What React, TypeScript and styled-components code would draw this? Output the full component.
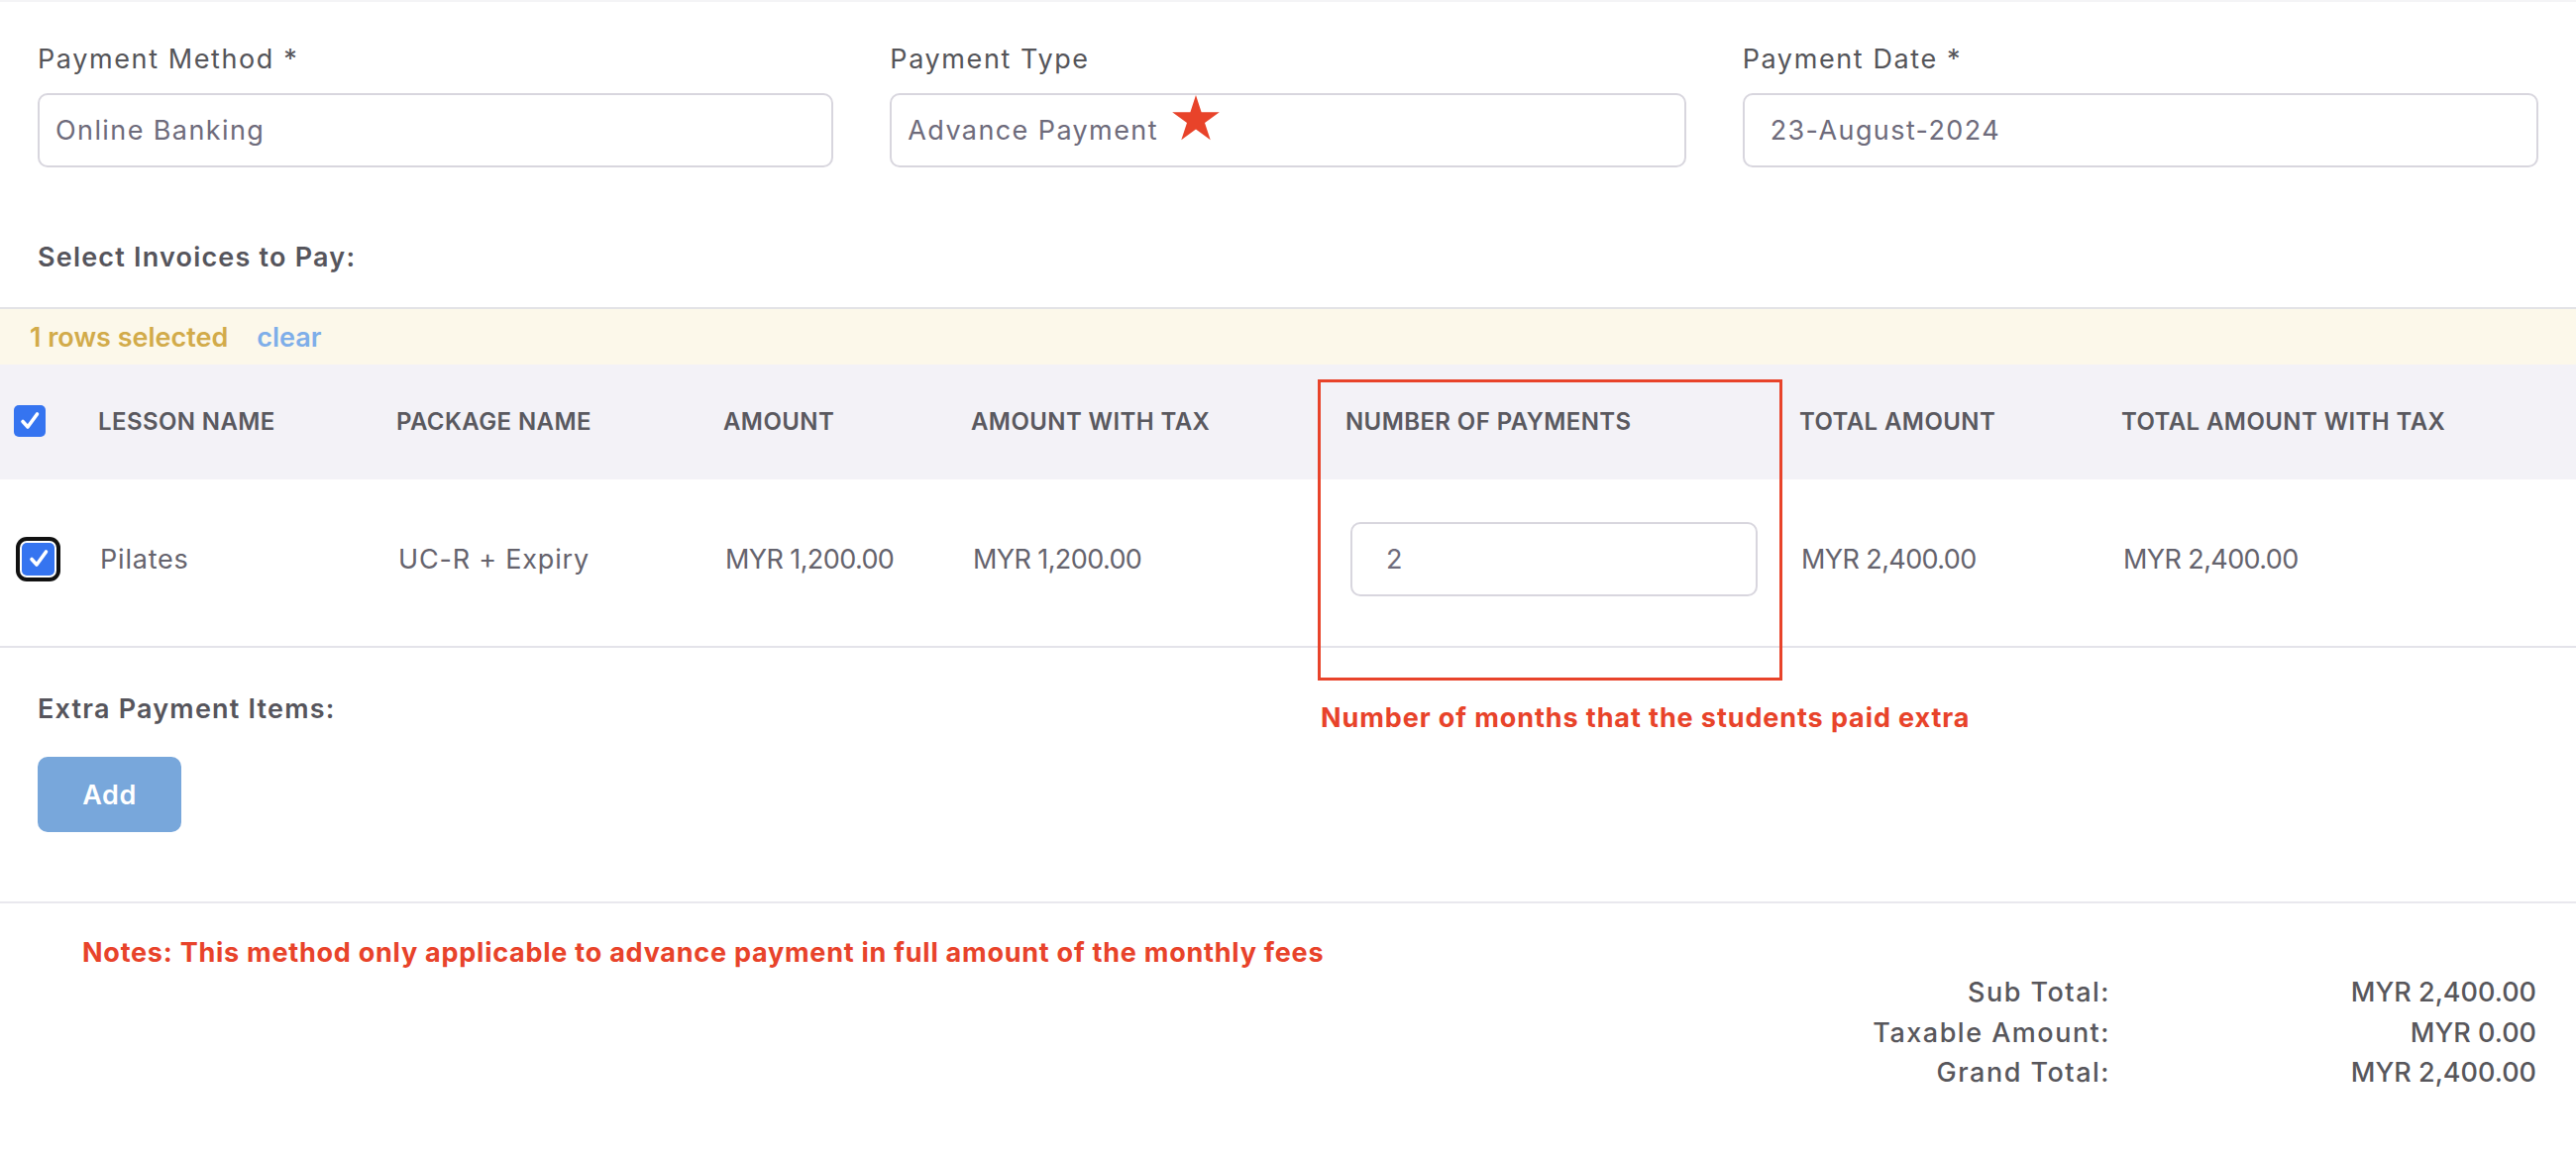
import { Fragment } from 'react';
import styled, { createGlobalStyle } from 'styled-components';

const GlobalStyle = createGlobalStyle`
  html, body {
    margin: 0;
    padding: 0;
    background: #ffffff;
  }
  body {
    font-family: Inter, "Open Sans", sans-serif;
    color: #6e6b7b;
  }
  * {
    box-sizing: border-box;
  }
`;

const Page = styled.div`
  width: 2600px;
  min-height: 1168px;
  border-top: 2px solid #f4f4f6;
`;

const FieldsRow = styled.div`
  display: grid;
  grid-template-columns: repeat(3, 1fr);
  column-gap: 57px;
  padding: 38px 38px 0;
`;

const Field = styled.div`
  display: flex;
  flex-direction: column;
  gap: 14px;
`;

const Label = styled.label`
  font-size: 27px;
  line-height: 40px;
  letter-spacing: 1.6px;
  color: #555559;
`;

const InputBox = styled.div<{ $pad?: number }>`
  position: relative;
  display: flex;
  align-items: center;
  height: 75px;
  padding: 0 ${(p) => p.$pad ?? 16}px;
  border: 2px solid #d8d6de;
  border-radius: 10px;
  font-size: 27px;
  letter-spacing: 1.4px;
  color: #6e6b7b;
  background: #fff;
`;

const Star = styled.svg`
  position: absolute;
  left: 282px;
  top: -1px;
  width: 50px;
  height: 48px;
`;

const SectionTitle = styled.div<{ $top: number }>`
  margin: ${(p) => p.$top}px 0 0 38px;
  font-size: 27px;
  line-height: 40px;
  font-weight: 600;
  letter-spacing: 1.2px;
  color: #56555c;
`;

const TableWrap = styled.div`
  position: relative;
  margin-top: 30px;
`;

const SelectionBar = styled.div`
  display: flex;
  align-items: center;
  gap: 29px;
  height: 58px;
  padding-left: 30px;
  border-top: 2px solid #e3e3e6;
  background: #fcf8ea;
  font-size: 27px;
  font-weight: 600;
`;

const SelectedText = styled.span`
  color: #d2ab4a;
`;

const ClearLink = styled.a`
  color: #7eaee9;
  cursor: pointer;
`;

const cols = '82px 301px 330px 250px 378px 458px 325px 1fr';

const HeaderRow = styled.div`
  display: grid;
  grid-template-columns: ${cols};
  align-items: center;
  height: 116px;
  padding-bottom: 2px;
  background: #f3f2f7;
`;

const HeadCell = styled.div`
  padding-left: 17px;
  font-size: 24px;
  font-weight: 600;
  letter-spacing: 0.4px;
  text-transform: uppercase;
  color: #5a595f;
  white-space: nowrap;
`;

const BodyRow = styled.div`
  display: grid;
  grid-template-columns: ${cols};
  align-items: center;
  height: 170px;
  padding-bottom: 8px;
  border-bottom: 2px solid #e4e3ea;
`;

const BodyCell = styled.div<{ $num?: boolean }>`
  padding-left: 19px;
  font-size: 27px;
  letter-spacing: ${(p) => (p.$num ? '-0.6px' : '0.8px')};
  color: #65636d;
  white-space: nowrap;
`;

const CheckCell = styled.div<{ $left: number }>`
  display: flex;
  align-items: center;
  padding-left: ${(p) => p.$left}px;
`;

const CheckBox = styled.span<{ $focused?: boolean }>`
  display: inline-flex;
  align-items: center;
  justify-content: center;
  width: ${(p) => (p.$focused ? 33 : 32)}px;
  height: ${(p) => (p.$focused ? 33 : 32)}px;
  border-radius: 5px;
  background: #3574f0;
  box-shadow: ${(p) => (p.$focused ? '0 0 0 2px #ffffff, 0 0 0 6px #111111' : 'none')};
  svg {
    width: 24px;
    height: 24px;
  }
`;

const InputCell = styled.div`
  padding: 0 25px 0 22px;
`;

const AnnotationBox = styled.div`
  position: absolute;
  left: 1330px;
  top: 73px;
  width: 469px;
  height: 304px;
  border: 3px solid #e8432a;
  pointer-events: none;
`;

const AnnotationText = styled.div`
  position: absolute;
  left: 1333px;
  top: 395px;
  font-size: 27px;
  line-height: 40px;
  font-weight: 700;
  letter-spacing: 0.9px;
  color: #e8432a;
  white-space: nowrap;
`;

const AddButton = styled.button`
  display: block;
  margin: 28px 0 0 38px;
  width: 145px;
  height: 76px;
  border: none;
  border-radius: 10px;
  background: #78a7db;
  color: #ffffff;
  font-family: inherit;
  font-size: 27px;
  font-weight: 600;
  letter-spacing: 0.6px;
`;

const Divider = styled.hr`
  margin: 70px 0 0;
  border: none;
  border-top: 2px solid #e9e8ee;
`;

const Footer = styled.div`
  padding: 30px 40px 40px 83px;
`;

const Note = styled.div`
  font-size: 27px;
  line-height: 40px;
  font-weight: 700;
  letter-spacing: 0.75px;
  color: #e8432a;
`;

const Totals = styled.div`
  display: grid;
  grid-template-columns: auto 430px;
  justify-content: end;
  font-size: 27px;
  line-height: 40.5px;
  font-weight: 500;
  color: #58575c;
  text-align: right;
`;

const TotalLabel = styled.span`
  letter-spacing: 1.5px;
`;

const TotalValue = styled.span`
  letter-spacing: 0;
`;

const Check = () => (
  <svg viewBox="0 0 24 24" fill="none">
    <path d="M5 12.5 L10 18 L19.5 5" stroke="#fff" strokeWidth="3.6" strokeLinecap="round" strokeLinejoin="round" />
  </svg>
);

const headers = [
  'Lesson Name',
  'Package Name',
  'Amount',
  'Amount With Tax',
  'Number of Payments',
  'Total Amount',
  'Total Amount With Tax',
];

const totals = [
  ['Sub Total:', 'MYR 2,400.00'],
  ['Taxable Amount:', 'MYR 0.00'],
  ['Grand Total:', 'MYR 2,400.00'],
];

export default function App() {
  return (
    <Page>
      <GlobalStyle />
      <FieldsRow>
        <Field>
          <Label>Payment Method *</Label>
          <InputBox>Online Banking</InputBox>
        </Field>
        <Field>
          <Label>Payment Type</Label>
          <InputBox>
            Advance Payment
            <Star viewBox="0 0 50 48">
              <polygon
                points="25,1 30.6,18.3 48.8,18.3 34,28.9 39.7,46.2 25,35.5 10.3,46.2 16,28.9 1.2,18.3 19.4,18.3"
                fill="#e8432a"
              />
            </Star>
          </InputBox>
        </Field>
        <Field>
          <Label>Payment Date *</Label>
          <InputBox $pad={26}>23-August-2024</InputBox>
        </Field>
      </FieldsRow>

      <SectionTitle $top={71}>Select Invoices to Pay:</SectionTitle>

      <TableWrap>
        <SelectionBar>
          <SelectedText>1 rows selected</SelectedText>
          <ClearLink>clear</ClearLink>
        </SelectionBar>
        <HeaderRow>
          <CheckCell $left={14}>
            <CheckBox>
              <Check />
            </CheckBox>
          </CheckCell>
          {headers.map((h) => (
            <HeadCell key={h}>{h}</HeadCell>
          ))}
        </HeaderRow>
        <BodyRow>
          <CheckCell $left={22}>
            <CheckBox $focused>
              <Check />
            </CheckBox>
          </CheckCell>
          <BodyCell>Pilates</BodyCell>
          <BodyCell>UC-R + Expiry</BodyCell>
          <BodyCell $num>MYR 1,200.00</BodyCell>
          <BodyCell $num>MYR 1,200.00</BodyCell>
          <InputCell>
            <InputBox $pad={34}>2</InputBox>
          </InputCell>
          <BodyCell $num>MYR 2,400.00</BodyCell>
          <BodyCell $num>MYR 2,400.00</BodyCell>
        </BodyRow>
        <AnnotationBox />
        <AnnotationText>Number of months that the students paid extra</AnnotationText>
      </TableWrap>

      <SectionTitle $top={42}>Extra Payment Items:</SectionTitle>
      <AddButton>Add</AddButton>

      <Divider />

      <Footer>
        <Note>Notes: This method only applicable to advance payment in full amount of the monthly fees</Note>
        <Totals>
          {totals.map(([label, value]) => (
            <Fragment key={label}>
              <TotalLabel>{label}</TotalLabel>
              <TotalValue>{value}</TotalValue>
            </Fragment>
          ))}
        </Totals>
      </Footer>
    </Page>
  );
}
